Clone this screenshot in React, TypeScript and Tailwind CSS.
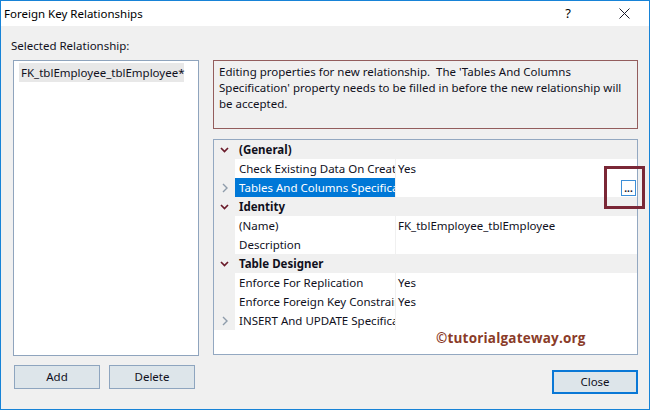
import React from "react";

const font = { fontFamily: '"Noto Sans", "Open Sans", sans-serif' };

function Down() {
  return (
    <svg width="9" height="6" viewBox="0 0 9 6">
      <polyline points="1,1 4.5,4.5 8,1" fill="none" stroke="#6a1a2a" strokeWidth="1.7" />
    </svg>
  );
}
function Right() {
  return (
    <svg width="6" height="10" viewBox="0 0 6 10">
      <polyline points="1,1 5,5 1,9" fill="none" stroke="#8e9cab" strokeWidth="1.4" />
    </svg>
  );
}

type Row =
  | { kind: "cat"; label: string }
  | { kind: "prop"; label: string; value?: string; expand?: boolean; selected?: boolean; ellipsis?: boolean };

const rows: Row[] = [
  { kind: "cat", label: "(General)" },
  { kind: "prop", label: "Check Existing Data On Creation Or Re-Enabling", value: "Yes" },
  { kind: "prop", label: "Tables And Columns Specification", expand: true, selected: true, ellipsis: true },
  { kind: "cat", label: "Identity" },
  { kind: "prop", label: "(Name)", value: "FK_tblEmployee_tblEmployee" },
  { kind: "prop", label: "Description", value: "" },
  { kind: "cat", label: "Table Designer" },
  { kind: "prop", label: "Enforce For Replication", value: "Yes" },
  { kind: "prop", label: "Enforce Foreign Key Constraint", value: "Yes" },
  { kind: "prop", label: "INSERT And UPDATE Specification", expand: true },
];

export default function App() {
  return (
    <div
      className="relative w-[650px] h-[410px] border border-[#1783d7] bg-[#f0f0f0] flex flex-col text-[11.5px] text-[#10101c] overflow-hidden"
      style={font}
    >
      {/* title bar */}
      <div className="h-[25px] bg-white flex items-center shrink-0">
        <span className="ml-[3px] text-[11.5px] leading-none text-black">Foreign Key Relationships</span>
        <div className="flex-1" />
        <span className="text-[13px] leading-none text-black mr-[48px]">?</span>
        <svg width="11" height="11" viewBox="0 0 11 11" className="mr-[19px]">
          <line x1="0.5" y1="0.5" x2="10.5" y2="10.5" stroke="#1a1a2a" strokeWidth="1" />
          <line x1="10.5" y1="0.5" x2="0.5" y2="10.5" stroke="#1a1a2a" strokeWidth="1" />
        </svg>
      </div>

      {/* body */}
      <div className="flex-1 flex flex-col pl-[10px]">
        <div className="mt-[12px] h-[16px] leading-[16px]">Selected Relationship:</div>
        <div className="mt-[6px] flex pl-[2px]">
          {/* left column */}
          <div className="w-[186px] flex flex-col">
            <div className="h-[296px] bg-white border border-[#8fa4bd] pt-[2px] pl-[5px]">
              <div className="w-[165px] h-[19px] bg-[#e8e8e8] leading-[19px] pl-[2px] whitespace-nowrap">FK_tblEmployee_tblEmployee*</div>
            </div>
            <div className="mt-[9px] ml-[1px] flex gap-[9px]">
              <button className="w-[86px] h-[24px] bg-[#dde5ea] border border-[#8ea5bf] leading-none">Add</button>
              <button className="w-[86px] h-[24px] bg-[#dde5ea] border border-[#8ea5bf] leading-none">Delete</button>
            </div>
          </div>

          {/* right column */}
          <div className="ml-[14px] w-[425px] flex flex-col">
            <div className="h-[69px] border border-[#935d5d] px-[5px] pt-[3px] leading-[16px]">
              Editing properties for new relationship.&nbsp; The 'Tables And Columns Specification' property needs to be filled in before the new relationship will be accepted.
            </div>
            <div className="relative mt-[10px] h-[216px] bg-white border border-[#93a8c1] flex flex-col">
              {rows.map((r, i) =>
                r.kind === "cat" ? (
                  <div key={i} className="h-[19px] flex bg-[#f0f0f0]">
                    <div className="w-[21px] flex items-center justify-center">
                      <Down />
                    </div>
                    <div className="pl-[4px] font-bold leading-[19px]">{r.label}</div>
                  </div>
                ) : (
                  <div key={i} className="h-[19px] flex">
                    <div className="w-[21px] bg-[#f0f0f0] flex items-center justify-center">
                      {r.expand ? <Right /> : null}
                    </div>
                    <div
                      className={
                        "w-[160px] pl-[4px] leading-[19px] whitespace-nowrap overflow-hidden " +
                        (r.selected ? "bg-[#0078d7] text-white" : "")
                      }
                    >
                      {r.label}
                    </div>
                    <div className="w-[1px] bg-[#f0f0f0]" />
                    <div className="flex-1 flex items-center pl-[2px] pr-[1px] leading-[19px]">
                      <span className="flex-1 whitespace-nowrap">{r.value}</span>
                      {r.ellipsis ? (
                        <div className="w-[15px] h-[16px] border border-[#3c8fd8] bg-white flex items-end justify-center pb-[2px] leading-none text-[10px] font-bold">
                          ...
                        </div>
                      ) : null}
                    </div>
                  </div>
                )
              )}
              <div
                className="absolute left-[222px] top-[192px] text-[13.5px] font-bold text-[#8a3b28] leading-none tracking-[0.2px]"
                style={{ fontFamily: '"Open Sans", "Noto Sans", sans-serif' }}
              >
                ©tutorialgateway.org
              </div>
            </div>
            <div className="mt-[15px] flex justify-end">
              <button className="w-[86px] h-[24px] bg-[#dde5ea] border-2 border-[#0a78d6] leading-none">Close</button>
            </div>
          </div>
        </div>
      </div>

      {/* red highlight box over the ellipsis button */}
      <div className="absolute left-[603px] top-[165px] w-[41px] h-[43px] border-[3px] border-[#7a2736]" />
    </div>
  );
}
